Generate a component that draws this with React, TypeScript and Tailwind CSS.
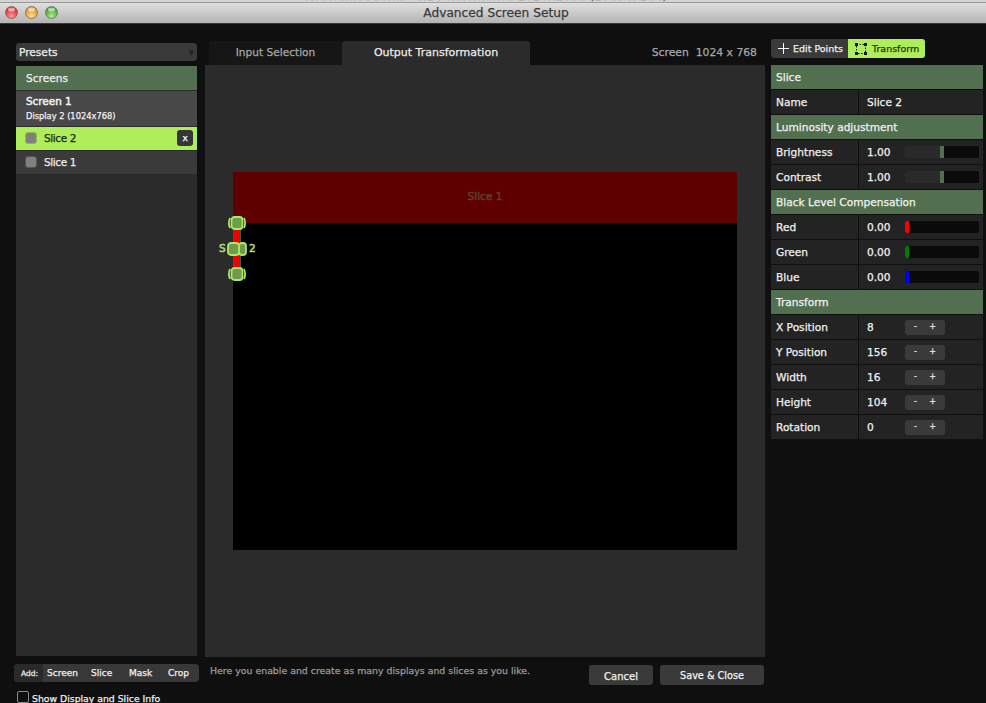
const font = { fontFamily: '"DejaVu Sans", sans-serif' };

function Light({ from, to, ring }: { from: string; to: string; ring: string }) {
  return (
    <svg width="13" height="13" viewBox="0 0 13 13">
      <defs>
        <radialGradient id={ring} cx="50%" cy="80%" r="70%">
          <stop offset="0%" stopColor={to} />
          <stop offset="100%" stopColor={from} />
        </radialGradient>
      </defs>
      <circle cx="6.5" cy="6.5" r="6" fill={`url(#${ring})`} stroke="#6b6b6b" strokeWidth="0.8" />
      <ellipse cx="6.5" cy="3.5" rx="3.5" ry="2" fill="#fff" opacity="0.55" />
    </svg>
  );
}

function Header({ children }: { children: string }) {
  return (
    <div className="h-6 flex items-center pl-[5px] pt-[2px] bg-[#527050] text-[10.6px] text-[#f0f0f0]">
      {children}
    </div>
  );
}

function Row({ label, value, children }: { label: string; value: string; children?: React.ReactNode }) {
  return (
    <div className="h-6 flex bg-[#232323] text-[10.6px] text-[#f0f0f0]">
      <div className="w-[88px] flex items-center pl-[5px] pt-[2px] border-r border-[#0f0f0f]">{label}</div>
      <div className="w-[38px] ml-[8px] flex items-center shrink-0 pt-[2px]">{value}</div>
      {children}
    </div>
  );
}

function Slider({ color, at }: { color: string; at: number }) {
  return (
    <div className="self-center w-[74px] h-[12px] bg-[#0a0a0a] rounded-[2px] flex overflow-hidden">
      <div className="bg-[#2a2a2a]" style={{ width: at }} />
      <div className="w-1" style={{ backgroundColor: color }} />
    </div>
  );
}

function Stepper() {
  return (
    <div className="self-center w-10 h-[15px] bg-[#3a3a3a] rounded-[3px] flex items-center justify-between pl-[9px] pr-[9px] text-[8px] text-[#e8e8e8]">
      <span>-</span>
      <span>+</span>
    </div>
  );
}

function Handle({ top }: { top: number }) {
  return (
    <svg className="absolute" style={{ left: 22, top: top - 7 }} width="20" height="14" viewBox="0 0 20 14">
      <rect x="4.5" y="1" width="11" height="12" rx="3" fill="#6f9a50" stroke="#a8ea60" strokeWidth="1.8" />
      <path d="M3 2 Q0.8 7 3 12 M17 2 Q19.2 7 17 12" fill="none" stroke="#a8ea60" strokeWidth="1.8" />
    </svg>
  );
}

function MiddleHandle({ top }: { top: number }) {
  return (
    <svg className="absolute" style={{ left: 22, top: top - 7 }} width="20" height="14" viewBox="0 0 20 14">
      <rect x="12" y="1" width="7" height="12" rx="3" fill="#6f9a50" stroke="#a8ea60" strokeWidth="1.8" />
      <rect x="1" y="1" width="11" height="12" rx="3" fill="#6f9a50" stroke="#a8ea60" strokeWidth="1.8" />
    </svg>
  );
}

function SliceRow({ label, active }: { label: string; active?: boolean }) {
  return (
    <div className={`h-[23px] mb-px flex items-center pl-[9px] pr-1 text-[10.5px] tracking-[-0.4px] ${active ? "bg-[#aeee5a] text-[#1c2a10]" : "bg-[#3a3a3a] text-[#ececec]"}`}>
      <div className={`w-3 h-3 rounded-[3px] bg-[#808080] border ${active ? "border-[#8fb85a]" : "border-[#555555]"}`} />
      <span className="ml-[7px] flex-1">{label}</span>
      {active && (
        <span className="w-4 h-4 rounded-[3px] bg-[#363636] text-white text-[9px] flex items-center justify-center">x</span>
      )}
    </div>
  );
}

export default function App() {
  return (
    <div className="w-[986px] h-[703px] overflow-hidden bg-[#0f0f0f] flex flex-col [-webkit-text-stroke:0.25px]" style={font}>
      <div className="h-6 shrink-0 relative overflow-hidden border-b border-[#3a3a3a] bg-gradient-to-b from-[#e6e6e6] to-[#b4b4b4] flex items-center justify-center">
        <div className="absolute top-0 left-0 right-0 h-[3px] overflow-hidden bg-[#d4d4d4] border-b border-[#9a9a9a]">
          <span className="absolute left-[305px] top-[-10px] text-[12px] text-[#6a6a6a] whitespace-nowrap leading-[13px]">Resolume Arena - 4.1 Performance 1920x1080 (1040 x 104)</span>
        </div>
        <div className="absolute left-[5px] top-[6px] flex gap-[7px]">
          <Light from="#d8202a" to="#ff9a9a" ring="r1" />
          <Light from="#d89020" to="#ffdc90" ring="r2" />
          <Light from="#3f9a2a" to="#b4ec94" ring="r3" />
        </div>
        <span className="text-[12.2px] text-[#3a3a3a] ml-[6px] mt-[3px]">Advanced Screen Setup</span>
      </div>

      <div className="flex-1 flex pl-4 min-h-0">
        <div className="w-[181px] shrink-0 pt-[19px] flex flex-col">
          <div className="h-[18px] bg-[#3a3a3a] rounded-[3px] flex items-center pl-[3px] pr-[3px] pt-[2px] text-[10.6px] text-[#f0f0f0]">
            <span className="flex-1">Presets</span>
            <span className="text-[#222222] text-[7px]">▼</span>
          </div>
          <div className="mt-[5px] h-[591px] bg-[#2b2b2b] flex flex-col">
            <div className="h-6 mb-px bg-[#527050] flex items-center pl-[10px] pt-[2px] text-[10.6px] text-[#f0f0f0]">Screens</div>
            <div className="h-[35px] mb-px bg-[#484848] pl-[10px] pt-[3px] text-[#f0f0f0]">
              <div className="text-[10.4px] leading-[14px] [-webkit-text-stroke:0.5px]">Screen 1</div>
              <div className="text-[8.3px] leading-[13px] mt-[2px]">Display 2 (1024x768)</div>
            </div>
            <SliceRow label="Slice 2" active />
            <SliceRow label="Slice 1" />
          </div>
          <div className="mt-2 -mx-[2px] h-[18px] bg-[#383838] rounded-[4px] flex items-center text-[9px] text-[#f0f0f0]">
            <span className="w-[29px] h-full rounded-l-[4px] bg-[#2a2a2a] flex items-center justify-center pl-[2px] pt-[1px] text-[7.5px]">Add:</span>
            <span className="ml-[4px] w-[38px] pt-[2px]">Screen</span>
            <span className="ml-[6px] w-[33px] pt-[2px]">Slice</span>
            <span className="ml-[5px] w-[34px] pt-[2px]">Mask</span>
            <span className="ml-[5px] pt-[2px]">Crop</span>
          </div>
          <div className="mt-[10px] flex items-center text-[9.3px] text-[#f0f0f0] -mx-px h-[11px]">
            <span className="w-3 h-3 ml-[2px] rounded-[2px] border border-[#8a8a8a] shrink-0" />
            <span className="ml-[3px] mt-[2px] whitespace-nowrap">Show Display and Slice Info</span>
          </div>
        </div>

        <div className="w-[560px] shrink-0 ml-2 pt-[17px] flex flex-col">
          <div className="h-6 flex text-[10.6px]">
            <div className="w-[133px] ml-[4px] rounded-t-[3px] bg-[#161616] flex items-center justify-center text-[#a8a8a8]">Input Selection</div>
            <div className="w-[188px] rounded-t-[3px] bg-[#2b2b2b] flex items-center justify-center text-[#ececec] text-[11px]">Output Transformation</div>
            <div className="flex-1 flex items-center justify-end pr-[8px] text-[10.8px] text-[#a8a8a8] whitespace-pre">Screen  1024 x 768</div>
          </div>
          <div className="h-[592px] bg-[#2b2b2b] relative">
            <div className="absolute left-[28px] top-[107px] w-[504px] h-[378px] bg-black">
              <div className="h-[51px] bg-[#5e0000] flex items-center justify-center pb-px text-[10.5px] text-[#5a3c2c] [-webkit-text-stroke:0.6px]">Slice 1</div>
            </div>
            <div className="absolute left-[28px] top-[158px] w-2 h-[51px] bg-[#f00000] border-x border-[#3d5c48]" />
            <Handle top={158} />
            <Handle top={209} />
            <span className="absolute left-[14px] top-[176px] text-[10.5px] text-[#a8d870] [-webkit-text-stroke:0.6px]">S</span>
            <span className="absolute left-[44px] top-[176px] text-[10.5px] text-[#a8d870] [-webkit-text-stroke:0.6px]">2</span>
            <MiddleHandle top={184} />
          </div>
          <div className="flex items-start mt-2">
            <span className="ml-[5px] flex-1 text-[9.4px] text-[#9a9a9a] mt-[-1px] whitespace-nowrap">Here you enable and create as many displays and slices as you like.</span>
            <button className="w-16 h-5 rounded-[3px] bg-[#3a3a3a] pt-[2px] text-[10px] text-[#f0f0f0]">Cancel</button>
            <button className="w-[104px] h-5 ml-[7px] mr-px rounded-[3px] bg-[#3a3a3a] pt-[2px] text-[9.7px] text-[#f0f0f0]">Save &amp; Close</button>
          </div>
        </div>

        <div className="w-[212px] shrink-0 ml-[6px] pt-[15px] flex flex-col">
          <div className="h-[19px] w-[154px] flex text-[9.5px]">
            <div className="w-[77px] bg-[#3a3a3a] rounded-l-[3px] flex items-center pl-[7px] text-[#f0f0f0]">
              <svg width="11" height="11" viewBox="0 0 11 11"><path d="M5.5 0V11M0 5.5H11" stroke="#fff" strokeWidth="1" /></svg>
              <span className="ml-[4px] pt-[1px]">Edit Points</span>
            </div>
            <div className="w-[77px] bg-[#aeee5a] rounded-r-[3px] flex items-center pl-[7px] text-[#1e3a12]">
              <svg width="12" height="12" viewBox="0 0 12 12">
                <rect x="1.5" y="1.5" width="9" height="9" fill="none" stroke="#111" strokeWidth="1" strokeDasharray="1.5 1.5" />
                <path d="M0 0h3v3H0zM9 0h3v3H9zM0 9h3v3H0zM9 9h3v3H9z" fill="#111" />
              </svg>
              <span className="ml-[5px] pt-[1px]">Transform</span>
            </div>
          </div>
          <div className="mt-[7px] flex flex-col gap-px">
            <Header>Slice</Header>
            <Row label="Name" value="Slice 2" />
            <Header>Luminosity adjustment</Header>
            <Row label="Brightness" value="1.00"><Slider color="#527050" at={35} /></Row>
            <Row label="Contrast" value="1.00"><Slider color="#527050" at={35} /></Row>
            <Header>Black Level Compensation</Header>
            <Row label="Red" value="0.00"><Slider color="#ff0000" at={0} /></Row>
            <Row label="Green" value="0.00"><Slider color="#007a00" at={0} /></Row>
            <Row label="Blue" value="0.00"><Slider color="#0000ff" at={0} /></Row>
            <Header>Transform</Header>
            <Row label="X Position" value="8"><Stepper /></Row>
            <Row label="Y Position" value="156"><Stepper /></Row>
            <Row label="Width" value="16"><Stepper /></Row>
            <Row label="Height" value="104"><Stepper /></Row>
            <Row label="Rotation" value="0"><Stepper /></Row>
          </div>
        </div>
      </div>
    </div>
  );
}
